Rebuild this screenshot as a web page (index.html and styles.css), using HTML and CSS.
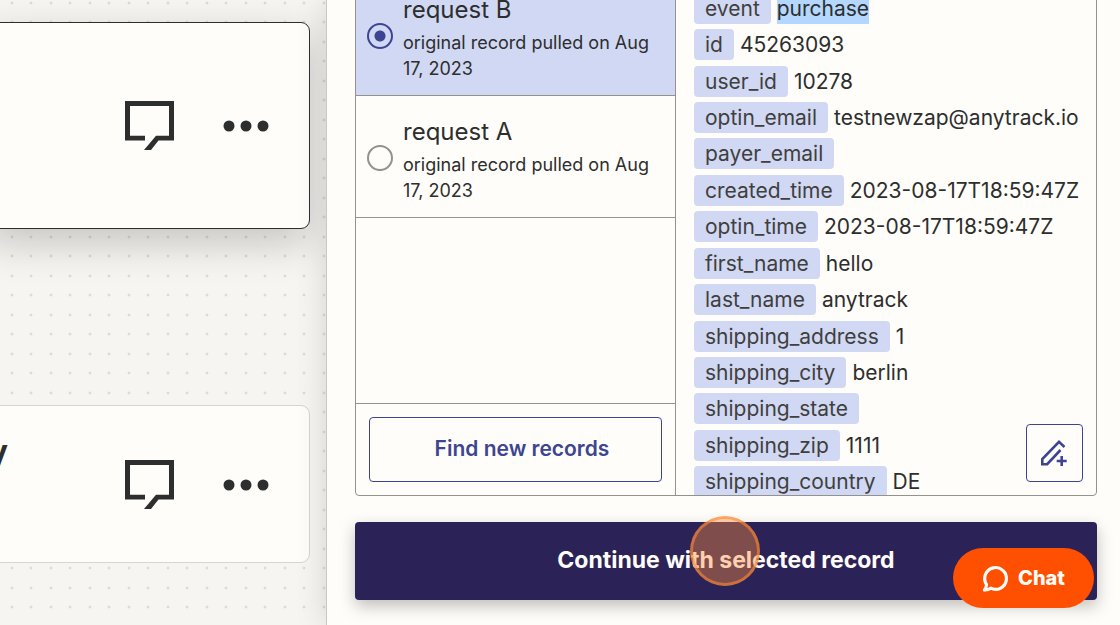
FILE: index.html
```html
<!DOCTYPE html>
<html lang="en">
<head>
  <meta charset="UTF-8" />
  <meta name="viewport" content="width=device-width, initial-scale=1" />
  <title>Select a record</title>
  <link rel="stylesheet" href="styles.css">
</head>
<body>

<main class="canvas">
  <section class="step selected">
    <button class="icon-btn" type="button" aria-label="Add note">
      <svg width="49" height="49" viewBox="0 0 49 49"><path d="M0 0H49V39.5H33.5L26 49H19L31 34.7H44V5H5V34.7H20V39.5H0Z" /></svg>
    </button>
    <button class="icon-btn" type="button" aria-label="More actions">
      <svg width="46" height="12" viewBox="0 0 46 12"><circle cx="6" cy="6" r="5.5" /><circle cx="23" cy="6" r="5.5" /><circle cx="40" cy="6" r="5.5" /></svg>
    </button>
  </section>

  <section class="step">
    <h2 class="step-title">y</h2>
    <button class="icon-btn" type="button" aria-label="Add note">
      <svg width="49" height="49" viewBox="0 0 49 49"><path d="M0 0H49V39.5H33.5L26 49H19L31 34.7H44V5H5V34.7H20V39.5H0Z" /></svg>
    </button>
    <button class="icon-btn" type="button" aria-label="More actions">
      <svg width="46" height="12" viewBox="0 0 46 12"><circle cx="6" cy="6" r="5.5" /><circle cx="23" cy="6" r="5.5" /><circle cx="40" cy="6" r="5.5" /></svg>
    </button>
  </section>
</main>

<aside class="panel">
  <div class="records">
    <div class="record-list">
      <label class="record active">
        <input type="radio" name="record" value="b" checked />
        <span class="record-text">
          <span class="record-name">request B</span>
          <span class="record-info">original record pulled on Aug 17, 2023</span>
        </span>
      </label>
      <label class="record">
        <input type="radio" name="record" value="a" />
        <span class="record-text">
          <span class="record-name">request A</span>
          <span class="record-info">original record pulled on Aug 17, 2023</span>
        </span>
      </label>
      <div class="record-footer">
        <button class="find-btn" type="button">Find new records</button>
      </div>
    </div>

    <div class="record-data">
      <ul class="fields">
        <li><span class="key">event</span><mark>purchase</mark></li>
        <li><span class="key">id</span><span>45263093</span></li>
        <li><span class="key">user_id</span><span>10278</span></li>
        <li><span class="key">optin_email</span><span>testnewzap@anytrack.io</span></li>
        <li><span class="key">payer_email</span></li>
        <li><span class="key">created_time</span><span>2023-08-17T18:59:47Z</span></li>
        <li><span class="key">optin_time</span><span>2023-08-17T18:59:47Z</span></li>
        <li><span class="key">first_name</span><span>hello</span></li>
        <li><span class="key">last_name</span><span>anytrack</span></li>
        <li><span class="key">shipping_address</span><span>1</span></li>
        <li><span class="key">shipping_city</span><span>berlin</span></li>
        <li><span class="key">shipping_state</span></li>
        <li><span class="key">shipping_zip</span><span>1111</span></li>
        <li><span class="key">shipping_country</span><span>DE</span></li>
      </ul>
      <button class="edit-btn" type="button" aria-label="Edit record">
        <svg width="27" height="27" viewBox="0 0 27 27"><path d="M23.5 7L18 1.9L1.3 19V24.2H6.2L19.5 10M20.7 16V26M15.7 21H25.7" /></svg>
      </button>
    </div>
  </div>

  <button class="continue-btn" type="button">
    Continue with selected record
    <span class="click-marker"></span>
  </button>
</aside>

<button class="chat-btn" type="button">
  <svg width="29" height="29" viewBox="0 0 24 24"><path d="M8 20A9 9 0 1 0 4.6 17Q4.4 20 2.8 21.4Q6 21.6 8 20Z" /></svg>
  Chat
</button>

</body>
</html>
```

FILE: styles.css
```css
* {
  box-sizing: border-box;
}
body {
  font-family: Inter, 'Liberation Sans', sans-serif;
  background: #fffdf9;
  color: #2d2e2e;
  margin: 0;
  height: 100vh;
  display: flex;
  overflow: hidden;
}
button {
  font-family: inherit;
  cursor: pointer;
}

/* editor canvas with the dotted grid */
.canvas {
  flex: 0 0 326px;
  padding: 22px 16px 0 0;
  display: flex;
  flex-direction: column;
  gap: 176px;
  overflow: hidden;
  background-color: #f6f5f2;
  background-image:
    radial-gradient(circle at 12px 3px, #d0cfcd 0, transparent 2px),
    radial-gradient(circle at 31px 3px, #d0cfcd 0, transparent 2px),
    radial-gradient(circle at 12px 22px, #d0cfcd 0, transparent 2px),
    radial-gradient(circle at 31px 22px, #d0cfcd 0, transparent 2px);
  background-size: 39px 39px;
}
.step {
  flex: none;
  margin-left: -14px;
  padding: 54px 40px 53px 0;
  display: flex;
  align-items: center;
  justify-content: flex-end;
  gap: 49px;
  background: #fffdf9;
  border: 1px solid #d7d5d2;
  border-radius: 0 9px 9px 0;
}
.step.selected {
  padding-top: 78px;
  padding-bottom: 78px;
  border-color: #2d2e2e;
  box-shadow: 0 14px 40px rgba(0, 0, 0, 0.2);
}
.step-title {
  align-self: flex-start;
  margin: -30px auto 0 0;
  font-size: 36px;
  line-height: 44px;
  font-weight: 600;
}
.icon-btn {
  display: flex;
  padding: 0;
  border: none;
  background: none;
  fill: #2d2e2e;
}

/* right side panel */
.panel {
  position: relative;
  flex: 1;
  min-width: 0;
  padding: 0 23px 25px 28px;
  display: flex;
  flex-direction: column;
  border-left: 1px solid #c9c8c6;
  background: #fffdf9;
  box-shadow: 0 0 30px rgba(0, 0, 0, 0.14);
}
/* the box is scrolled a little past the top edge */
.records {
  flex: 1;
  min-height: 0;
  margin-top: -27px;
  display: flex;
  border: 1px solid #95928e;
  border-radius: 4px;
  overflow: hidden;
}
.record-list {
  flex: 0 0 320px;
  display: flex;
  flex-direction: column;
  border-right: 1px solid #95928e;
}
.record {
  display: flex;
  align-items: center;
  gap: 10px;
  padding: 16px 11px 13px;
  border-bottom: 1px solid #95928e;
  cursor: pointer;
}
.record.active {
  background: #d1d8f3;
}
.record input {
  appearance: none;
  flex: none;
  width: 26px;
  height: 26px;
  margin: 0;
  border: 2px solid #95928e;
  border-radius: 50%;
}
.record input:checked {
  border-color: #3d4592;
  background: radial-gradient(circle, #3d4592 5px, transparent 6px);
}
.record-name {
  display: block;
  font-size: 24px;
  line-height: 40px;
}
.record-info {
  display: block;
  font-size: 18px;
  line-height: 26px;
}
.record-footer {
  margin-top: auto;
  padding: 13px;
  border-top: 1px solid #95928e;
}
.find-btn {
  width: 100%;
  height: 65px;
  padding: 0 0 2px 13px;
  border: 1px solid #3d4592;
  border-radius: 4px;
  background: #fffdf9;
  color: #3d4592;
  font-size: 21px;
  font-weight: 600;
}

.record-data {
  position: relative;
  flex: 1;
  min-width: 0;
  padding: 16px 0 0 18px;
}
.fields {
  display: grid;
  grid-auto-rows: 1fr;
  align-items: center;
  height: 510px;
  margin: 0;
  padding: 0;
  list-style: none;
  font-size: 21px;
  line-height: 31px;
}
.fields li {
  display: flex;
  gap: 6px;
  white-space: nowrap;
}
.key {
  padding: 0 11px;
  border-radius: 4px;
  background: #d1d8f3;
  color: #403f3e;
}
mark {
  background: #b3d7ff;
  color: inherit;
}
.edit-btn {
  position: absolute;
  right: 13px;
  bottom: 13px;
  width: 57px;
  height: 58px;
  display: flex;
  align-items: center;
  justify-content: center;
  padding: 0;
  border: 1px solid #3d4592;
  border-radius: 4px;
  background: #fffdf9;
}
.edit-btn path {
  fill: none;
  stroke: #3d4592;
  stroke-width: 2.6;
}

.continue-btn {
  position: relative;
  height: 78px;
  margin-top: 26px;
  padding: 0 0 2px;
  border: none;
  border-radius: 4px;
  background: #2b2358;
  color: #fffdf9;
  font-size: 23px;
  font-weight: 700;
  box-shadow: 0 6px 16px rgba(0, 0, 0, 0.25);
}
.click-marker {
  position: absolute;
  top: -6px;
  left: calc(50% - 36px);
  width: 70px;
  height: 70px;
  border: 3px solid rgba(255, 139, 50, 0.6);
  border-radius: 50%;
  background: rgba(255, 139, 61, 0.4);
}

.chat-btn {
  position: fixed;
  right: 26px;
  bottom: 17px;
  height: 60px;
  display: flex;
  align-items: center;
  gap: 8px;
  padding: 0 29px 0 28px;
  border: none;
  border-radius: 30px;
  background: #ff4f00;
  color: #fffdf9;
  font-size: 20px;
  font-weight: 800;
}
.chat-btn path {
  fill: none;
  stroke: #fffdf9;
  stroke-width: 2.6;
  stroke-linejoin: round;
}
```
